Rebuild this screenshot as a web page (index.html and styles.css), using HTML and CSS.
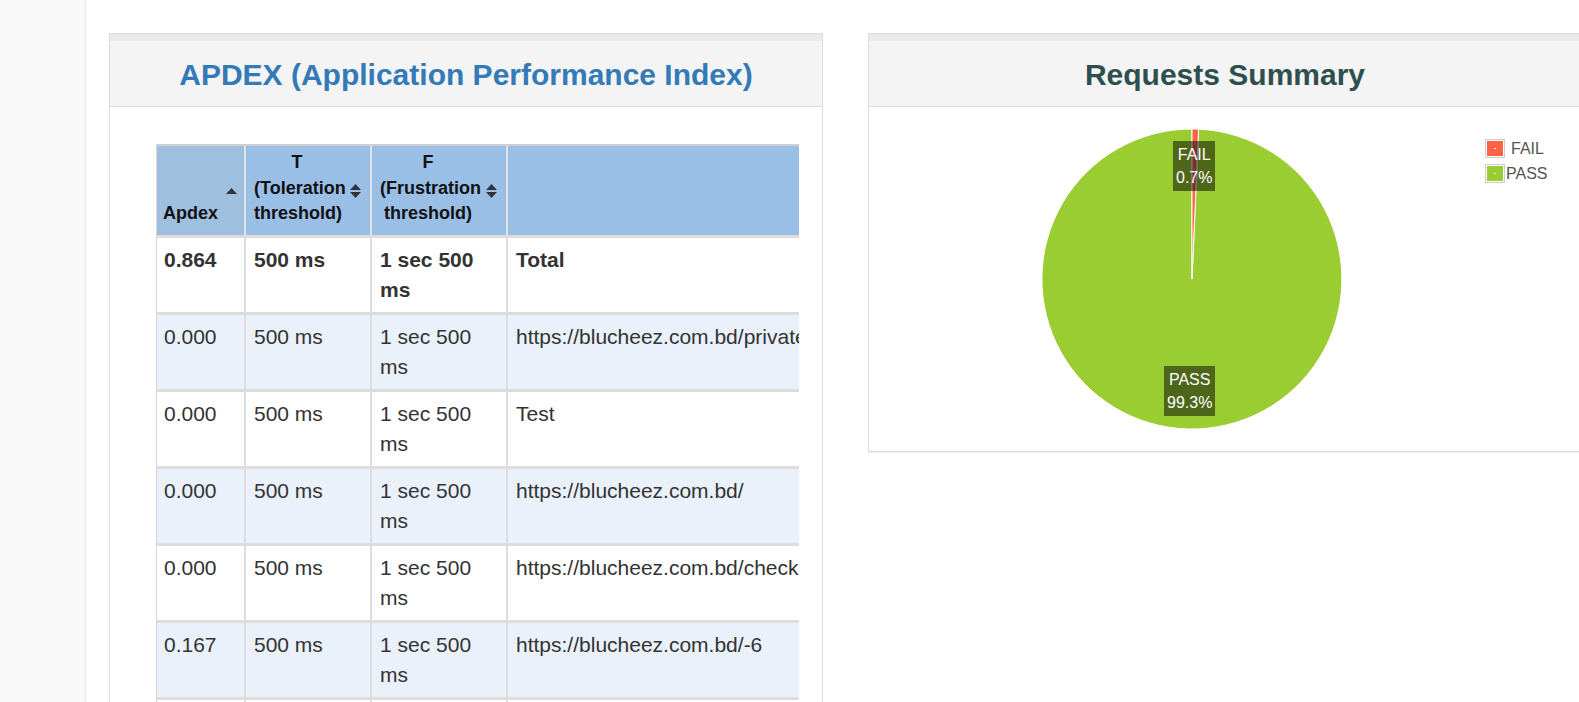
FILE: index.html
```html
<!DOCTYPE html>
<html lang="en">
<head>
<meta charset="utf-8">
<title>Dashboard</title>
<link rel="stylesheet" href="styles.css">
</head>
<body>
<div class="page">
  <aside class="sidebar"></aside>
  <main class="content">
    <section class="panel panel-apdex">
      <div class="panel-heading">
        <h2 class="title title-link">APDEX (Application Performance Index)</h2>
      </div>
      <div class="panel-body apdex-body">
        <div class="table-wrap">
          <table class="tbl">
            <colgroup>
              <col class="c1"><col class="c2"><col class="c3"><col class="c4">
            </colgroup>
            <thead>
              <tr>
                <th class="sorted">Apdex<svg class="sort-asc" width="11" height="6" viewBox="0 0 11 6"><polygon points="0,6 5.5,0 11,6" fill="#333"/></svg></th>
                <th>T<br>(Toleration threshold)<svg class="sort-both" width="11" height="14" viewBox="0 0 11 14"><polygon points="0,6 5.5,0 11,6" fill="#333"/><polygon points="0,8 5.5,14 11,8" fill="#333"/></svg></th>
                <th>F<br>(Frustration threshold)<svg class="sort-both" width="11" height="14" viewBox="0 0 11 14"><polygon points="0,6 5.5,0 11,6" fill="#333"/><polygon points="0,8 5.5,14 11,8" fill="#333"/></svg></th>
                <th class="label-col"></th>
              </tr>
            </thead>
            <tbody>
              <tr class="total">
                <td>0.864</td><td>500 ms</td><td>1 sec 500 ms</td><td class="lbl">Total</td>
              </tr>
              <tr class="alt">
                <td>0.000</td><td>500 ms</td><td>1 sec 500 ms</td><td class="lbl">https://blucheez.com.bd/private-label</td>
              </tr>
              <tr>
                <td>0.000</td><td>500 ms</td><td>1 sec 500 ms</td><td class="lbl">Test</td>
              </tr>
              <tr class="alt">
                <td>0.000</td><td>500 ms</td><td>1 sec 500 ms</td><td class="lbl">https://blucheez.com.bd/</td>
              </tr>
              <tr>
                <td>0.000</td><td>500 ms</td><td>1 sec 500 ms</td><td class="lbl">https://blucheez.com.bd/checkout</td>
              </tr>
              <tr class="alt">
                <td>0.167</td><td>500 ms</td><td>1 sec 500 ms</td><td class="lbl">https://blucheez.com.bd/-6</td>
              </tr>
              <tr class="empty">
                <td></td><td></td><td></td><td class="lbl"></td>
              </tr>
            </tbody>
          </table>
        </div>
      </div>
    </section>

    <section class="panel panel-summary">
      <div class="panel-heading">
        <h2 class="title title-dark">Requests Summary</h2>
      </div>
      <div class="panel-body summary-body">
        <div class="chart">
          <svg class="pie" width="700" height="344" viewBox="0 0 700 344">
            <path d="M323,172 L329.6,22.15 A150,150 0 1,1 323,22 Z" fill="#9acd32" stroke="#ffffff" stroke-width="1" stroke-linejoin="round"/>
            <path d="M323,172 L323,22 A150,150 0 0,1 329.6,22.15 Z" fill="#ff6347" stroke="#ffffff" stroke-width="1" stroke-linejoin="round"/>
          </svg>
          <div class="pie-label pie-label-fail">FAIL<br>0.7%</div>
          <div class="pie-label pie-label-pass">PASS<br>99.3%</div>
          <table class="legend">
            <tr>
              <td class="swatch-cell"><div class="swatch"><div class="swatch-fill fill-fail"></div></div></td>
              <td class="legend-label legend-fail">FAIL</td>
            </tr>
            <tr>
              <td class="swatch-cell"><div class="swatch"><div class="swatch-fill fill-pass"></div></div></td>
              <td class="legend-label legend-pass">PASS</td>
            </tr>
          </table>
        </div>
      </div>
    </section>
  </main>
</div>
</body>
</html>
```

FILE: styles.css
```css
* {
  box-sizing: border-box;
}

html,
body {
  margin: 0;
  padding: 0;
}

body {
  font-family: "Liberation Sans", Arial, Helvetica, sans-serif;
  color: #333;
  background: #fff;
  overflow: hidden;
}

.page {
  display: flex;
  height: 702px;
  overflow: hidden;
}

.sidebar {
  flex: 0 0 86px;
  background: #f8f8f8;
  border-right: 1px solid #e7e7e7;
}

.content {
  flex: 1 1 auto;
  min-width: 0;
  display: flex;
  align-items: flex-start;
  gap: 45px;
  padding: 33px 0 0 23px;
  overflow: hidden;
}

.panel {
  flex: 0 0 714px;
  width: 714px;
  min-width: 0;
  background: #fff;
  border: 1px solid #ddd;
  box-shadow: 0 1px 1px rgba(0, 0, 0, 0.06);
}

.panel-heading {
  background: #f4f4f4;
  border-top: 7px solid #e8ebee;
  border-bottom: 1px solid #ddd;
  padding: 17px 15px 15px;
  text-align: center;
}

.title {
  margin: 0;
  font-size: 30px;
  line-height: 33px;
  font-weight: bold;
  white-space: nowrap;
}

.title-link {
  color: #337ab7;
}

.title-dark {
  color: #2f4f4f;
}

/* APDEX table */
.apdex-body {
  padding: 37px 23px 0 46px;
  height: 620px;
  min-width: 0;
}

.table-wrap {
  overflow: hidden;
  width: 643px;
}

.tbl {
  table-layout: fixed;
  width: 1052px;
  border-collapse: separate;
  border-spacing: 0;
  border-top: 2px solid #d0d0d0;
  border-left: 1px solid #d6d6d6;
}

.c1 { width: 89px; }
.c2 { width: 126px; }
.c3 { width: 136px; }
.c4 { width: 700px; }

.tbl th {
  position: relative;
  background: #99bfe6;
  color: #111;
  font-size: 18px;
  font-weight: bold;
  line-height: 25.7px;
  padding: 4px 30px 8px 8px;
  vertical-align: bottom;
  text-align: center;
  border-right: 2px solid #e0e4e8;
  border-bottom: 3px solid #ddd;
}

.tbl th.sorted {
  background: #9fbfdf;
  text-align: left;
  padding-left: 6px;
}

.sort-asc,
.sort-both {
  position: absolute;
  top: 50%;
  transform: translateY(-50%);
}

.sort-asc {
  right: 7px;
}

.sort-both {
  right: 9px;
}

.tbl td {
  font-size: 21px;
  line-height: 30px;
  padding: 7px 8px;
  vertical-align: top;
  background: #fff;
  border-right: 2px solid #ddd;
  border-bottom: 3px solid #ddd;
}

.tbl td:first-child {
  padding-left: 7px;
}

.tbl td.lbl {
  white-space: nowrap;
}

.tbl tr.alt td {
  background: #eaf1fa;
}

.tbl tr.total td {
  font-weight: bold;
}

.tbl tr.empty td {
  height: 60px;
}

/* Requests summary */
.summary-body {
  padding: 0;
}

.chart {
  position: relative;
  height: 344px;
}

.pie {
  position: absolute;
  left: 0;
  top: 0;
}

.pie-label {
  position: absolute;
  background: rgba(0, 0, 0, 0.5);
  color: #fff;
  font-size: 16px;
  line-height: 23px;
  padding: 2px 3px;
  text-align: center;
}

.pie-label-fail {
  left: 304px;
  top: 34px;
}

.pie-label-pass {
  left: 295px;
  top: 259px;
}

.legend {
  position: absolute;
  left: 616px;
  top: 29px;
  border-collapse: collapse;
  font-size: 16px;
  color: #545454;
}

.legend td {
  padding: 0;
  height: 25px;
  vertical-align: middle;
}

.swatch {
  border: 1px solid #ccc;
  padding: 1px;
}

.swatch-fill {
  width: 2px;
  height: 1px;
  background: #fff;
  border: 7px solid;
  box-sizing: content-box;
}

.fill-fail {
  border-color: #ff6347;
}

.fill-pass {
  border-color: #9acd32;
}

.legend-fail {
  padding-left: 6px !important;
}

.legend-pass {
  padding-left: 1px !important;
}
```
